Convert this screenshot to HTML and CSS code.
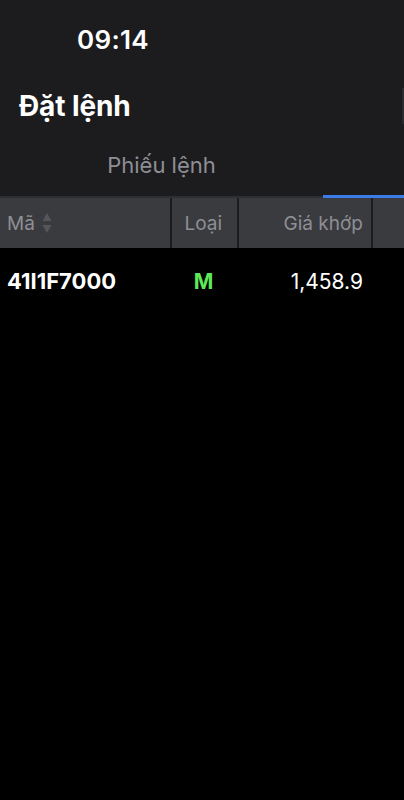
FILE: index.html
```html
<!DOCTYPE html>
<html lang="vi">
<head>
  <meta charset="UTF-8" />
  <title>Đặt lệnh</title>
  <meta name="viewport" content="width=device-width, initial-scale=1.0" />
  <link rel="stylesheet" href="styles.css">
</head>
<body>
  <div class="top">
    <div class="status-bar">
      <span class="time">09:14</span>
    </div>

    <div class="title-row">
      <h1>Đặt lệnh</h1>
      <div class="edge"></div>
    </div>

    <div class="tabs">
      <div class="tab">Phiếu lệnh</div>
      <div class="tab active"></div>
    </div>
  </div>

  <div class="table">
    <div class="table-head">
      <div class="cell code">
        Mã
        <svg class="sort" width="10" height="22" viewBox="0 0 10 22">
          <path d="M5 1 L9.5 9 H0.5 Z" fill="#55565c" />
          <path d="M5 21 L9.5 13 H0.5 Z" fill="#55565c" />
        </svg>
      </div>
      <div class="cell type">Loại</div>
      <div class="cell price">Giá khớp</div>
      <div class="cell extra"></div>
    </div>

    <div class="table-row">
      <div class="cell code">41I1F7000</div>
      <div class="cell type buy">M</div>
      <div class="cell price">1,458.9</div>
      <div class="cell extra"></div>
    </div>
  </div>
</body>
</html>
```

FILE: styles.css
```css
* {
  box-sizing: border-box;
}

html, body {
  margin: 0;
  padding: 0;
  height: 100%;
  background: #000;
  font-family: Inter, 'Liberation Sans', sans-serif;
  color: #fff;
  overflow: hidden;
}

.top {
  background: #1c1c1f;
}

.status-bar {
  height: 78px;
  display: flex;
  align-items: center;
  padding-left: 77px;
}

.time {
  font-size: 26px;
  font-weight: 600;
  letter-spacing: 0.3px;
}

.title-row {
  height: 56px;
  display: flex;
  align-items: center;
  justify-content: space-between;
  padding-left: 19px;
}

.title-row h1 {
  margin: 0;
  font-size: 28px;
  font-weight: 700;
  letter-spacing: -0.1px;
}

.edge {
  width: 2px;
  height: 36px;
  background: #2a2b2f;
}

.tabs {
  display: flex;
  height: 64px;
  border-bottom: 2px solid #2e2f33;
}

.tab {
  width: 323px;
  display: flex;
  align-items: center;
  justify-content: center;
  font-size: 22px;
  color: #8e8f94;
}

.tab.active {
  flex: 1;
  width: auto;
  border-bottom: 3px solid #3b7bea;
  margin-bottom: -2px;
}

.table-head,
.table-row {
  display: grid;
  grid-template-columns: 170px 65px 132px 1fr;
  column-gap: 2px;
}

.table-head {
  height: 50px;
  background: #1c1c1f;
  color: #8e8f94;
  font-size: 19px;
}

.table-head .cell {
  background: #3a3b3f;
}

.table-row {
  height: 66px;
  font-size: 21px;
}

.cell {
  display: flex;
  align-items: center;
  justify-content: flex-end;
  padding-right: 8px;
}

.table-head .type {
  padding-right: 15px;
}

.cell.code {
  justify-content: flex-start;
  padding-left: 7px;
  gap: 7px;
}

.table-row .code {
  font-size: 22px;
  font-weight: 700;
}

.table-row .type {
  justify-content: center;
  padding-right: 0;
  margin-left: -2px;
}

.buy {
  color: #5ee85a;
  font-weight: 700;
}

.sort {
  display: block;
}
```
